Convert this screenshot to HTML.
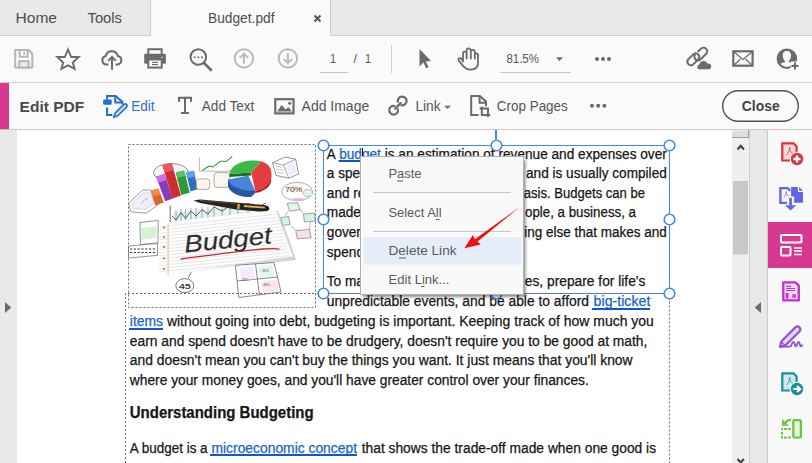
<!DOCTYPE html>
<html>
<head>
<meta charset="utf-8">
<style>
html,body{margin:0;padding:0;width:812px;height:463px;overflow:hidden;background:#fff;font-family:"Liberation Sans",sans-serif;}
.a{position:absolute;}
svg{position:absolute;left:0;top:0;overflow:visible;}
svg text{font-family:"Liberation Sans",sans-serif;}
</style>
</head>
<body>
<!-- tab bar -->
<div class="a" style="left:0;top:0;width:812px;height:35px;background:#e9e9e9;border-bottom:1px solid #cdcdcd;"></div>
<div class="a" style="left:150px;top:0;width:179px;height:36px;background:#fafafa;border-left:1px solid #cdcdcd;border-right:1px solid #cdcdcd;"></div>
<!-- toolbar -->
<div class="a" style="left:0;top:36px;width:812px;height:46px;background:#fafafa;border-bottom:1px solid #d2d2d2;"></div>
<!-- edit bar -->
<div class="a" style="left:0;top:83px;width:812px;height:46px;background:#fafafa;border-bottom:1px solid #c9c9c9;"></div>
<div class="a" style="left:0;top:83px;width:9px;height:46px;background:#d6398f;"></div>
<!-- main -->
<div class="a" style="left:0;top:130px;width:17px;height:333px;background:#e9e9e9;"></div>
<div class="a" style="left:17px;top:130px;width:715px;height:333px;background:#ffffff;"></div>
<div class="a" style="left:732px;top:130px;width:17px;height:333px;background:#efefef;border-right:1px solid #cfcfcf;"></div>
<div class="a" style="left:750px;top:130px;width:17px;height:333px;background:#e8e8e8;border-right:1px solid #c8c8c8;"></div>
<div class="a" style="left:768px;top:130px;width:44px;height:333px;background:#f9f9f9;"></div>

<svg width="812" height="463" viewBox="0 0 812 463">
  <!-- tab texts -->
  <text x="15.5" y="22.5" font-size="15" fill="#4e4e4e" textLength="41.5" lengthAdjust="spacingAndGlyphs">Home</text>
  <text x="87.5" y="22.5" font-size="15" fill="#4e4e4e" textLength="34.5" lengthAdjust="spacingAndGlyphs">Tools</text>
  <text x="208" y="23" font-size="14" fill="#4e4e4e" textLength="66.5" lengthAdjust="spacingAndGlyphs">Budget.pdf</text>
  <path d="M314.5 15.5 L320.5 21.5 M320.5 15.5 L314.5 21.5" stroke="#555" stroke-width="2" fill="none"/>

  <!-- toolbar icons -->
  <g fill="none" stroke="#b5b5b5" stroke-width="2">
    <path d="M15.2 50 H28.8 L32.3 53.8 V67.6 H15.2 Z" stroke-linejoin="round"/>
    <rect x="19.6" y="50" width="8" height="6.8"/>
    <rect x="19.2" y="61.2" width="9.4" height="6.4" fill="#ececec"/>
  </g>
  <rect x="23.3" y="52" width="1.8" height="2.8" fill="#b5b5b5"/>
  <path d="M68 49.5 L71.2 57 L78.7 57 L72.8 62.5 L74.6 68.8 L68 65.3 L61.4 68.8 L63.2 62.5 L57.3 57 L64.8 57 Z" fill="none" stroke="#6b6b6b" stroke-width="1.9" stroke-linejoin="miter"/>
  <g fill="none" stroke="#6b6b6b" stroke-width="2">
    <path d="M108.5 64.5 H106.5 A4.3 4.3 0 0 1 105.8 56 A6.2 6.2 0 0 1 117.8 56 A4.3 4.3 0 0 1 117.6 64.5 H115.5"/>
    <path d="M112 69.8 V56.8 M108.3 60.8 L112 57 L115.7 60.8"/>
  </g>
  <g fill="#6b6b6b">
    <path d="M148.3 54 V49.2 H161.7 V54" fill="none" stroke="#6b6b6b" stroke-width="2"/>
    <rect x="144.2" y="53.8" width="21.7" height="10" rx="1.3"/>
    <rect x="148.3" y="59.5" width="13.4" height="8.1" fill="#fff" stroke="#6b6b6b" stroke-width="2"/>
    <rect x="152" y="61.8" width="6" height="1.2"/>
    <rect x="152" y="64" width="6" height="1.2"/>
    <rect x="161.3" y="57" width="1.6" height="1" fill="#ddd"/>
  </g>
  <g fill="none" stroke="#6b6b6b">
    <circle cx="198.3" cy="57" r="7.8" stroke-width="2"/>
    <path d="M204 63 L211 70" stroke-width="2.6" stroke-linecap="round"/>
  </g>
  <g fill="#6b6b6b"><circle cx="194.6" cy="57.2" r="1"/><circle cx="198.3" cy="57.2" r="1"/><circle cx="202" cy="57.2" r="1"/></g>
  <g fill="none" stroke="#b9b9b9" stroke-width="2">
    <circle cx="243.9" cy="58.4" r="9.2"/>
    <path d="M243.9 63.8 V53.6 M239.6 57.9 L243.9 53.6 L248.2 57.9"/>
    <circle cx="287.9" cy="58.4" r="9.2"/>
    <path d="M287.9 53 V63.2 M283.6 58.9 L287.9 63.2 L292.2 58.9"/>
  </g>
  <text x="330" y="63.2" font-size="12.5" fill="#555" textLength="6" lengthAdjust="spacingAndGlyphs">1</text>
  <rect x="320" y="72" width="28" height="1" fill="#c4c4c4"/>
  <text x="353.5" y="63.2" font-size="12.5" fill="#555">/</text>
  <text x="365" y="63.2" font-size="12.5" fill="#555" textLength="6" lengthAdjust="spacingAndGlyphs">1</text>
  <rect x="391" y="45" width="1" height="28" fill="#cfcfcf"/>
  <path d="M419.5 49 L431 61 L425.8 61.5 L428.6 67.2 L426.2 68.3 L423.4 62.6 L419.5 66.5 Z" fill="#6b6b6b"/>
  <path d="M463 61.5 V53.5 A1.8 1.8 0 0 1 466.6 53.5 V50.5 A2.1 2.1 0 0 1 470.8 50.5 V51.8 A2 2 0 0 1 474.8 51.8 V55 A1.6 1.6 0 0 1 478 55 V63 C478 67 475.5 69.6 470.5 69.6 C467 69.6 465 68.3 462.6 65.4 L458.8 60.6 C457.9 59.4 458.6 57.6 460.3 58.2 C461.3 58.6 462.2 59.6 463 61.5 Z M466.6 53.5 V59.3 M470.8 51.8 V59.3 M474.8 55 V59.3" fill="none" stroke="#6b6b6b" stroke-width="1.8" stroke-linejoin="round"/>
  <text x="506.4" y="63.2" font-size="12.5" fill="#555" textLength="32.6" lengthAdjust="spacingAndGlyphs">81.5%</text>
  <path d="M556 57.3 H563 L559.5 61 Z" fill="#6b6b6b"/>
  <rect x="500" y="72" width="71" height="1" fill="#c8c8c8"/>
  <g fill="#6b6b6b"><circle cx="597" cy="59" r="2"/><circle cx="603" cy="59" r="2"/><circle cx="609" cy="59" r="2"/></g>
  <g fill="none" stroke="#6b6b6b" stroke-width="2">
    <path d="M697.6 52 L701 48.8 A3.6 3.6 0 0 1 706.2 53.8 L700.6 59.4 A3.6 3.6 0 0 1 695.4 54.4"/>
    <path d="M699.6 58 L693 64.6 A3.6 3.6 0 0 1 688 59.6 L693.6 54 A3.6 3.6 0 0 1 698.6 59" />
  </g>
  <path d="M699 69.2 C696.8 69.2 696.6 65 699.6 64.2 C700.2 60.6 705.6 59.8 707.4 63.6 C709.6 63.4 711.6 64.6 711.2 66.8 C711 68.4 710 69.2 709 69.2 Z" fill="#6b6b6b"/>
  <g fill="none" stroke="#6b6b6b">
    <rect x="733.3" y="51.3" width="19.3" height="14.4" stroke-width="2.2"/>
    <path d="M733.5 51.5 L743 59.5 L752.5 51.5 M733.5 65.5 L740.5 59 M752.5 65.5 L745.5 59" stroke-width="1.2"/>
  </g>
  <clipPath id="pc"><circle cx="786.9" cy="58.7" r="8.2"/></clipPath>
  <circle cx="786.9" cy="58.7" r="10.3" fill="#6b6b6b"/>
  <path clip-path="url(#pc)" d="M786.9 50.8 C784 50.8 782.6 53.2 782.8 56 C783 58.6 784 60.2 784.9 61 V62.3 C781.5 63 778 64.5 777 67.5 V72 H797 V67.5 C796 64.5 792.3 63 788.9 62.3 V61 C789.8 60.2 790.8 58.6 791 56 C791.2 53.2 789.8 50.8 786.9 50.8 Z" fill="#fafafa"/>
  <rect x="790.7" y="61.5" width="9.5" height="9.5" fill="#fafafa"/>
  <path d="M795 62.4 V69.6 M791.4 66 H798.6" stroke="#6b6b6b" stroke-width="2"/>

  <!-- edit bar -->
  <text x="19.6" y="111.5" font-size="15.3" font-weight="bold" fill="#4a4a4a" textLength="64.6" lengthAdjust="spacingAndGlyphs">Edit PDF</text>
  <g fill="none" stroke="#1f6fd0" stroke-width="2">
    <path d="M107.1 99.5 V96 H115.6 L122.3 101.8 V104.5"/>
    <path d="M115.3 96 V102.4 H122.3"/>
    <path d="M107.1 107.5 V115 H112.3"/>
  </g>
  <rect x="103.2" y="99.5" width="8.5" height="5.2" rx="1" fill="#1f6fd0"/>
  <path d="M124 104.3 C124.7 103.6 125.6 103.6 126.3 104.3 L126.6 104.6 C127.3 105.3 127.3 106.2 126.6 106.9 L118 115.5 L113.6 117.3 L115.4 112.9 Z" fill="#fafafa" stroke="#1f6fd0" stroke-width="1.7" stroke-linejoin="round"/>
  <path d="M124.9 105.9 L116.6 114.2" stroke="#a8c8ee" stroke-width="0.9"/>
  <text x="131.2" y="111" font-size="14" fill="#2b72c7" textLength="23.2" lengthAdjust="spacingAndGlyphs">Edit</text>
  <g fill="none" stroke="#6b6b6b" stroke-width="2">
    <path d="M179 101.8 V97.8 H191 V101.8 M185 97.8 V113 M181 113 H189"/>
  </g>
  <text x="201.8" y="111.3" font-size="14" fill="#555" textLength="52.6" lengthAdjust="spacingAndGlyphs">Add Text</text>
  <rect x="275.3" y="99.2" width="18.2" height="14.2" fill="none" stroke="#6b6b6b" stroke-width="2.2"/>
  <path d="M277.2 111.5 L281.6 105 L285.6 109.4 L288.4 107 L292 111.5 Z" fill="#6b6b6b"/>
  <circle cx="289.6" cy="103.3" r="1.5" fill="#6b6b6b"/>
  <text x="301.6" y="111.3" font-size="14" fill="#555" textLength="67.6" lengthAdjust="spacingAndGlyphs">Add Image</text>
  <g fill="none" stroke="#6b6b6b" stroke-width="2.2" stroke-linecap="round">
    <path d="M397.87 101.76 A4.4 4.4 0 1 1 401.44 105.33"/>
    <path d="M397.93 109.44 A4.4 4.4 0 1 1 394.36 105.87"/>
    <path d="M400.6 103.2 L395.2 108.6" stroke-width="2.4"/>
  </g>
  <text x="415.4" y="111" font-size="14" fill="#555" textLength="25.2" lengthAdjust="spacingAndGlyphs">Link</text>
  <path d="M444 105.8 H451 L447.5 109 Z" fill="#6b6b6b"/>
  <g fill="none" stroke="#6b6b6b" stroke-width="2">
    <path d="M478.6 115 H471.2 V96 H479.9 L486 101.4 V106.2"/>
    <path d="M479.6 96 V102.7 H486"/>
    <path d="M481.8 106.6 V115 H490.3 M479.6 108.5 H488 V117"/>
  </g>
  <text x="496.8" y="111" font-size="14" fill="#555" textLength="71" lengthAdjust="spacingAndGlyphs">Crop Pages</text>
  <g fill="#6b6b6b"><circle cx="592" cy="105.8" r="2"/><circle cx="598.2" cy="105.8" r="2"/><circle cx="604.4" cy="105.8" r="2"/></g>
  <rect x="722.7" y="90.7" width="75.6" height="30.6" rx="15.3" fill="#fafafa" stroke="#505050" stroke-width="1.4"/>
  <text x="741.8" y="110.7" font-size="15" font-weight="bold" fill="#444" textLength="38" lengthAdjust="spacingAndGlyphs">Close</text>

  <!-- document image -->
  <g id="img">
    <defs>
      <linearGradient id="shad" x1="0" y1="0" x2="1" y2="0"><stop offset="0" stop-color="#ddd" stop-opacity="0"/><stop offset="1" stop-color="#bbb" stop-opacity="0.7"/></linearGradient>
    </defs>
    <!-- tablet sketch left -->
    <path d="M128.5 203.3 L142.7 190 L151.2 190 L158.2 204.7 L146.2 213.2 L130.8 211.8 Z" fill="#fdfdff" stroke="#777" stroke-width="0.7"/>
    <path d="M132 203 L143.5 193 L150 193 L154.5 203 L145.5 209.5 L133.5 208.5 Z" fill="#efeefb" stroke="#aaa" stroke-width="0.4"/>
    <path d="M141 204 L146 198 L148 200" fill="none" stroke="#888" stroke-width="0.5"/>
    <!-- sketch ellipse behind bars -->
    <ellipse cx="171" cy="172.5" rx="17.5" ry="9" fill="#f7f2fb" stroke="#666" stroke-width="0.7"/>
    <!-- bars 3D -->
    <path d="M150.5 190.7 L158.2 188.6 L163.8 202.6 L155.4 205.4 Z" fill="#d8692a"/>
    <path d="M150.5 190.7 L158.2 188.6 L161 194.2 L153.3 196.3 Z" fill="#f08c45"/>
    <path d="M156.1 176.7 L164.5 173.9 L172.9 198.4 L165.2 201.2 Z" fill="#8a3cb5"/>
    <path d="M156.1 176.7 L164.5 173.9 L167 180 L158.6 182.8 Z" fill="#c373e6"/>
    <path d="M162.4 165.4 L171.5 162.9 L181 195.6 L172.6 198.4 Z" fill="#cf2d33"/>
    <path d="M162.4 165.4 L171.5 162.9 L174 170 L165 172.5 Z" fill="#f0555a"/>
    <path d="M175.7 172.2 L184.1 170.4 L189.8 192.8 L181.3 194.9 Z" fill="#2f9a38"/>
    <path d="M175.7 172.2 L184.1 170.4 L185.8 176 L177.4 177.8 Z" fill="#58c85e"/>
    <path d="M186.2 172.5 L194 170.8 L197.5 189.3 L190.5 191.4 Z" fill="#2f6fc0"/>
    <path d="M186.2 172.5 L194 170.8 L195.3 176.5 L187.5 178.2 Z" fill="#62a0ea"/>
    <!-- line chart top -->
    <path d="M199.4 157.8 V171.2 H236" fill="none" stroke="#888" stroke-width="0.6"/>
    <path d="M202 170.5 L209 166.2 L213.2 167 L220.3 161.3 L226.6 161.3 L232.2 156.4" fill="none" stroke="#3a9a3a" stroke-width="1.1"/>
    <rect x="214" y="172.6" width="16" height="14.7" rx="3" fill="#fdf6ef" stroke="#777" stroke-width="0.6"/>
    <rect x="196.4" y="178.9" width="13.3" height="10.5" rx="2.5" fill="#fdf5ea" stroke="#777" stroke-width="0.6"/>
    <!-- pie chart -->
    <path d="M228 179.6 V185.9 A23 12 0 0 0 251.1 197.1 L255.4 193 V190.8 Z" fill="#2a56a6"/>
    <path d="M228 179.6 L248.3 175.4 L255.4 190.8 A25 13 0 0 1 228 179.6 Z" fill="#4586dc"/>
    <path d="M255.4 190.8 V193 A20 14 0 0 0 271 181.7 V174 A20 16 0 0 1 255.4 190.8 Z" fill="#a81f25"/>
    <path d="M251.1 172.6 L261.7 161.3 A20 14 0 0 1 271.5 174 A20 16 0 0 1 255.4 190.8 Z" fill="#e63c40"/>
    <path d="M229.4 174 V177 L251.1 175.5 V172.6 Z" fill="#1d6a23"/>
    <path d="M229.4 174 A24 14 0 0 1 261.7 161.3 L251.1 172.6 Z" fill="#3db848"/>
    <!-- cube sketch -->
    <path d="M272.5 162.7 L285.2 157.1 L295.7 159.2 L298.5 174 L288.7 178.2 L276 175.4 Z" fill="#fff" stroke="#666" stroke-width="0.7"/>
    <path d="M272.5 162.7 L283.5 165 L288.7 178.2 M283.5 165 L295.7 159.2" fill="none" stroke="#666" stroke-width="0.6"/>
    <path d="M285.5 165.5 L294 161.5 L296.5 172.5 L289.5 176 Z" fill="#eeeefc"/>
    <path d="M275 166 L282 167.5 M276 169 L283 170.5 M277 172 L284 173.5" stroke="#888" stroke-width="0.5"/>
    <!-- 70% bubble -->
    <ellipse cx="297.1" cy="191.5" rx="15.4" ry="9.1" fill="#fff" stroke="#777" stroke-width="0.6"/>
    <ellipse cx="293" cy="189" rx="8" ry="4" fill="#fdf0e2"/>
    <text x="285.2" y="191.5" font-size="6.8" fill="#4a3c30" textLength="17" lengthAdjust="spacingAndGlyphs">70%</text>
    <ellipse cx="307.6" cy="193" rx="5" ry="3.6" fill="#dcf1f3" stroke="#888" stroke-width="0.5"/>
    <rect x="292.9" y="198.3" width="11.2" height="2.4" rx="1.2" fill="#ecaef0"/>
    <!-- flowchart right -->
    <path d="M287.3 203.4 L297.8 202.7 L299.9 209.7 L289.4 211.1 Z" fill="#e4f6e8" stroke="#666" stroke-width="0.6"/>
    <path d="M281 217.5 L288.6 216.5 L290.1 224.5 L282.5 225.5 Z" fill="#d6eff3" stroke="#666" stroke-width="0.6"/>
    <path d="M303.4 214 L314.5 213 L315.5 221 L304.5 222 Z" fill="#d6eff3" stroke="#666" stroke-width="0.6"/>
    <path d="M295.7 230.5 L309.5 229.5 L311.1 237.8 L297.3 238.8 Z" fill="#fbdde2" stroke="#666" stroke-width="0.6"/>
    <path d="M285 215.5 L288 211.5 M303 213 L300 210 M291 226 L295.5 229.5 M309.5 229 L310.5 222.5" fill="none" stroke="#666" stroke-width="0.5"/>
    <!-- chart under pen -->
    <path d="M172 212 L268 206 L272 222 L174 226 Z" fill="#e2f3f4"/>
    <path d="M170.2 205.5 V223.5" stroke="#444" stroke-width="0.8"/>
    <path d="M172 216 L176 220 L181 212.5 L185.5 218.5 L191 211 L196 216 L202 209.5 L208 214 L214 207 L222 211 L230 205.5 L238 209 L248 203.5 L258 207 L266 203" fill="none" stroke="#333" stroke-width="0.8"/>
    <path d="M176 210 V224 M181 209 V223.5 M185.5 209 V223 M191 208 V223 M196 208 V222.5 M202 207 V222 M208 207 V222 M214 206 V221.5 M222 206 V221 M230 205 V220.5 M238 205 V220 M248 204 V219.5 M258 204 V219" stroke="#555" stroke-width="0.5"/>
    <!-- pen -->
    <path d="M193.5 200.5 L200 199.6 L264 205 C268.5 205.5 270 207.5 269 209.5 C268 211.5 265 212 262 211.8 L236 209.5 L200 203 Z" fill="#2b211d"/>
    <path d="M200 200.5 L236 203.5" stroke="#6a5a50" stroke-width="0.7"/>
    <path d="M237.5 203.8 L240 204 L239.5 209.3 L237 209.1 Z" fill="#c9a447"/>
    <path d="M244 205 L265 206.8 L264.5 208.6 L244 207 Z" fill="#d4b24e"/>
    <!-- laptop sketch left lower -->
    <path d="M140 222.5 L158.2 220.5 L158 242.9 L140.5 244.5 Z" fill="#fff" stroke="#666" stroke-width="0.7"/>
    <path d="M141.5 228 L156.5 226.5 L156.5 238 L141.5 239.5 Z" fill="#d4f3d4"/>
    <path d="M128.5 246 L157.5 243.5 L157.5 255.4 L128.5 258 Z" fill="#fff" stroke="#666" stroke-width="0.7"/>
    <path d="M130 249 H156 M130 252.5 H156" stroke="#333" stroke-width="1.1" stroke-dasharray="2.2 1.6"/>
    <!-- notepad -->
    <path d="M158 224.5 C200 219 250 213 278 210.5 C284 225 290 240 296 260 C250 265 200 270 158 278 Z" fill="url(#shad)"/>
    <path d="M159.6 223.5 C200 218 248 212.5 276 210.5 C281 225 287 240 292.9 256.5 C250 262 200 268 157.5 275 Z" fill="#fdfdfd"/>
    <g stroke="#d0d0d0" stroke-width="0.5" fill="none">
      <path d="M160 227 L277.5 214 M160 230.2 L278.5 217.2 M160 233.4 L279.5 220.4 M160 236.6 L280.5 223.6 M160 239.8 L281.5 226.8 M160 243 L282.5 230 M160 246.2 L283.5 233.2 M160 249.4 L284.5 236.4 M159.5 252.6 L285.5 239.6 M159.5 255.8 L286.5 242.8 M159.5 259 L287.5 246 M159.5 262.2 L288.5 249.2 M159 265.4 L289.5 252.4 M159 268.6 L290.5 255.6 M158.5 271.8 L291 258.8"/>
    </g>
    <path d="M168.1 224 V275" stroke="#eab89a" stroke-width="0.9"/>
    <g fill="#888"><ellipse cx="163.9" cy="227.5" rx="1.3" ry="1"/><ellipse cx="163.9" cy="237.3" rx="1.3" ry="1"/><ellipse cx="163.9" cy="247.1" rx="1.3" ry="1"/><ellipse cx="163.9" cy="258.3" rx="1.3" ry="1"/><ellipse cx="163.9" cy="268.9" rx="1.3" ry="1"/></g>
    <text x="185" y="252.5" font-size="24" font-style="italic" fill="#2e2e2e" stroke="#2e2e2e" stroke-width="0.15" transform="rotate(-6 185 252.5)" textLength="88" lengthAdjust="spacingAndGlyphs">Budget</text>
    <path d="M180.7 259 C205 256 240 251 263 249 C272 248.3 277 248.5 279.6 249.1" fill="none" stroke="#c42a2e" stroke-width="1.3"/>
    <!-- 45 -->
    <path d="M188.4 277.9 L191.2 272.3" stroke="#444" stroke-width="0.8"/>
    <ellipse cx="184.8" cy="285.6" rx="9" ry="7" fill="#fff" stroke="#555" stroke-width="0.8"/>
    <text x="178.8" y="288.6" font-size="8" font-weight="bold" fill="#4a3a4a" textLength="12" lengthAdjust="spacingAndGlyphs">45</text>
    <!-- bottom grid sketch -->
    <path d="M235.4 265.3 L274 262.5 L281 292 L238.9 297.5 Z" fill="#fff" stroke="#555" stroke-width="0.7" stroke-linejoin="round"/>
    <path d="M255.5 264 L259.5 295 M237 281 L278 277" stroke="#555" stroke-width="0.7" fill="none"/>
    <path d="M240 268 L253 267 L255 279 L241 280 Z" fill="#f5eafa"/>
    <path d="M258.5 266 L272 265 L275 276 L260 277.5 Z" fill="#e4f5f6"/>
    <path d="M261 281 L277 279.5 L279 291 L263 293 Z" fill="#fbe6ea"/>
    <text x="241.5" y="281" font-size="3.6" fill="#555">28%</text>
    <text x="262" y="272" font-size="3.6" fill="#555">36%</text>
    <text x="263" y="286" font-size="3.6" fill="#555">48%</text>
  </g>

  <!-- dashed boxes -->
  <rect x="128.5" y="144.5" width="187" height="163" fill="none" stroke="#6a6a6a" stroke-width="1" stroke-dasharray="2 2"/>

  <!-- doc text -->
  <g stroke-width="0.25">
<text x="326.8" y="158.6" font-size="14" fill="#161616" stroke="#161616" textLength="9.0" lengthAdjust="spacingAndGlyphs" xml:space="preserve">A</text>
<text x="339.2" y="158.6" font-size="14" fill="#161616" stroke="#161616" textLength="327.6" lengthAdjust="spacingAndGlyphs" xml:space="preserve"><tspan fill="#1a62c8" stroke="#1a62c8">budget</tspan> is an estimation of revenue and expenses over</text>
<text x="326.8" y="178.2" font-size="14" fill="#161616" stroke="#161616" textLength="65.2" lengthAdjust="spacingAndGlyphs" xml:space="preserve">a specified</text>
<text x="526.0" y="178.2" font-size="14" fill="#161616" stroke="#161616" textLength="140.8" lengthAdjust="spacingAndGlyphs" xml:space="preserve">and is usually compiled</text>
<text x="326.8" y="197.7" font-size="14" fill="#161616" stroke="#161616" textLength="102.3" lengthAdjust="spacingAndGlyphs" xml:space="preserve">and re-evaluated</text>
<text x="523.8" y="197.7" font-size="14" fill="#161616" stroke="#161616" textLength="121.2" lengthAdjust="spacingAndGlyphs" xml:space="preserve">asis. Budgets can be</text>
<text x="326.8" y="217.3" font-size="14" fill="#161616" stroke="#161616" textLength="65.2" lengthAdjust="spacingAndGlyphs" xml:space="preserve">made for a</text>
<text x="525.0" y="217.3" font-size="14" fill="#161616" stroke="#161616" textLength="111.0" lengthAdjust="spacingAndGlyphs" xml:space="preserve">ople, a business, a</text>
<text x="326.8" y="236.9" font-size="14" fill="#161616" stroke="#161616" textLength="75.8" lengthAdjust="spacingAndGlyphs" xml:space="preserve">government,</text>
<text x="524.3" y="236.9" font-size="14" fill="#161616" stroke="#161616" textLength="142.5" lengthAdjust="spacingAndGlyphs" xml:space="preserve">ing else that makes and</text>
<text x="326.8" y="256.5" font-size="14" fill="#161616" stroke="#161616" textLength="91.5" lengthAdjust="spacingAndGlyphs" xml:space="preserve">spends money.</text>
<text x="326.8" y="286.0" font-size="14" fill="#161616" stroke="#161616" textLength="67.5" lengthAdjust="spacingAndGlyphs" xml:space="preserve">To manage</text>
<text x="524.8" y="286.0" font-size="14" fill="#161616" stroke="#161616" textLength="120.6" lengthAdjust="spacingAndGlyphs" xml:space="preserve">es, prepare for life's</text>
<text x="326.8" y="305.6" font-size="14" fill="#161616" stroke="#161616" textLength="262.2" lengthAdjust="spacingAndGlyphs" xml:space="preserve">unpredictable events, and be able to afford</text>
<text x="593.6" y="305.6" font-size="14" fill="#161616" stroke="#161616" textLength="56.8" lengthAdjust="spacingAndGlyphs" xml:space="preserve"><tspan fill="#1a62c8" stroke="#1a62c8">big-ticket</tspan></text>
<text x="129.8" y="325.9" font-size="14" fill="#161616" stroke="#161616" textLength="33.2" lengthAdjust="spacingAndGlyphs" xml:space="preserve"><tspan fill="#1a62c8" stroke="#1a62c8">items</tspan></text>
<text x="166.9" y="325.9" font-size="14" fill="#161616" stroke="#161616" textLength="486.9" lengthAdjust="spacingAndGlyphs" xml:space="preserve">without going into debt, budgeting is important. Keeping track of how much you</text>
<text x="129.8" y="345.5" font-size="14" fill="#161616" stroke="#161616" textLength="517.6" lengthAdjust="spacingAndGlyphs" xml:space="preserve">earn and spend doesn't have to be drudgery, doesn't require you to be good at math,</text>
<text x="129.8" y="365.1" font-size="14" fill="#161616" stroke="#161616" textLength="502.8" lengthAdjust="spacingAndGlyphs" xml:space="preserve">and doesn't mean you can't buy the things you want. It just means that you'll know</text>
<text x="129.8" y="384.7" font-size="14" fill="#161616" stroke="#161616" textLength="459.0" lengthAdjust="spacingAndGlyphs" xml:space="preserve">where your money goes, and you'll have greater control over your finances.</text>
<text x="129.8" y="418.2" font-size="16" font-weight="bold" fill="#161616" stroke="#161616" textLength="183.8" lengthAdjust="spacingAndGlyphs" xml:space="preserve">Understanding Budgeting</text>
<text x="129.8" y="453.0" font-size="14" fill="#161616" stroke="#161616" textLength="77.8" lengthAdjust="spacingAndGlyphs" xml:space="preserve">A budget is a</text>
<text x="211.5" y="453.0" font-size="14" fill="#161616" stroke="#161616" textLength="145.5" lengthAdjust="spacingAndGlyphs" xml:space="preserve"><tspan fill="#1a62c8" stroke="#1a62c8">microeconomic concept</tspan></text>
<text x="361.7" y="453.0" font-size="14" fill="#161616" stroke="#161616" textLength="294.4" lengthAdjust="spacingAndGlyphs" xml:space="preserve">that shows the trade-off made when one good is</text>
  </g>
  <g fill="#1259c6">
    <rect x="338.5" y="160" width="38" height="2"/>
    <rect x="592" y="308" width="58" height="2"/>
    <rect x="129" y="328" width="34" height="2"/>
    <rect x="210" y="454" width="147" height="2"/>
  </g>
  <!-- lower text box dashed -->
  <path d="M125.5 463 V293.5 H316 M669.5 293.5 V463" fill="none" stroke="#6a6a6a" stroke-width="1" stroke-dasharray="2 2"/>

  <!-- selection -->
  <g fill="none" stroke="#3d8bf2">
    <rect x="323.5" y="145.5" width="346" height="148" stroke-width="1"/>
    <path d="M496 130 V139.5" stroke-width="2"/>
  </g>
  <path d="M316 293.5 H669.5" fill="none" stroke="#6a6a6a" stroke-width="1" stroke-dasharray="2 2" opacity="0.6"/>
  <g fill="#fff" stroke="#3d8bf2" stroke-width="1.6">
    <circle cx="323.5" cy="145.5" r="5.3"/>
    <circle cx="496.5" cy="145.5" r="5.3"/>
    <circle cx="669.5" cy="145.5" r="5.3"/>
    <circle cx="323.5" cy="219.5" r="5.3"/>
    <circle cx="669.5" cy="219.5" r="5.3"/>
    <circle cx="323.5" cy="293.5" r="5.3"/>
    <circle cx="496.5" cy="293.5" r="5.3"/>
    <circle cx="669.5" cy="293.5" r="5.3"/>
  </g>
  <rect x="362" y="148" width="1" height="8" fill="#111"/>

  <!-- context menu -->
  <filter id="msh" x="-20%" y="-20%" width="140%" height="140%"><feGaussianBlur stdDeviation="1.6"/></filter>
  <rect x="362.5" y="160" width="163" height="137" fill="#000" opacity="0.45" filter="url(#msh)"/>
  <rect x="360.5" y="156.5" width="163" height="138" fill="#f9f9f9" stroke="#b0b0b0" stroke-width="1"/>
  <rect x="373" y="192" width="138" height="1" fill="#c6c6c6"/>
  <rect x="373" y="231" width="138" height="1" fill="#c6c6c6"/>
  <rect x="363.5" y="237" width="158" height="27.5" fill="#e5eef8"/>
  <g font-size="13.5" fill="#5a5a5a">
    <text x="388.5" y="178.2" textLength="33" lengthAdjust="spacingAndGlyphs">Paste</text>
    <text x="388.5" y="216.9" textLength="53" lengthAdjust="spacingAndGlyphs">Select All</text>
    <text x="388.5" y="255.4" textLength="68" lengthAdjust="spacingAndGlyphs">Delete Link</text>
    <text x="388.5" y="283.8" textLength="61" lengthAdjust="spacingAndGlyphs">Edit Link...</text>
  </g>
  <g fill="#5a5a5a">
    <rect x="397" y="180.5" width="6" height="1"/>
    <rect x="436" y="219" width="3.5" height="1"/>
    <rect x="399" y="257.5" width="7" height="1"/>
    <rect x="421" y="286" width="3.5" height="1"/>
  </g>
  <!-- red arrow -->
  <path d="M464.4 248.3 L472.9 235 L474.8 239.2 L519.7 207.1 L477.6 241.5 L480.7 244.6 Z" fill="#f01010"/>

  <!-- scrollbar & panels -->
  <rect x="732" y="131" width="16.5" height="6.5" fill="#dedede"/>
  <rect x="732" y="137" width="17" height="1" fill="#9d9d9d"/>
  <rect x="748" y="130" width="1" height="8" fill="#9d9d9d"/>
  <path d="M737.5 149.5 L740.7 145.8 L744 149.5" fill="none" stroke="#404040" stroke-width="2"/>
  <rect x="733" y="181" width="15" height="73.5" fill="#c8c8c8"/>
  <path d="M737.5 459 L740.7 462.5 L744 459" fill="none" stroke="#404040" stroke-width="2"/>
  <path d="M5 302 L11.2 307.5 L5 313 Z" fill="#6a6a6a"/>
  <path d="M754.8 307.5 L761 302 L761 313 Z" fill="#6a6a6a"/>

  <!-- right tool panel -->
  <rect x="768" y="222" width="44" height="46" fill="#d6398f"/>
  <g fill="none" stroke="#fff" stroke-width="2">
    <rect x="781" y="235" width="20.5" height="7.5" rx="1"/>
    <rect x="781" y="247" width="9.5" height="8.5" rx="1"/>
    <path d="M794 248 H802 M794 251 H802 M794 254.5 H802" stroke-width="1.5"/>
  </g>
  <!-- create pdf -->
  <path d="M782.3 143.3 H793.6 L796.6 146.4 V152 M789.9 160.5 H782.3 Z" fill="#f8d7da"/>
  <path d="M789.9 160.5 H782.3 V143.3 H793.6 L796.6 146.4 V152" fill="#f8d7da" stroke="#d9333f" stroke-width="2.2"/>
  <path d="M786.5 155 C788 153.5 789.6 151 790 148 C790.3 146.5 789.5 147.5 789.5 149 C789.8 151 791.5 153 793.5 153.5" fill="none" stroke="#d9333f" stroke-width="0.8"/>
  <circle cx="797" cy="159" r="7.2" fill="#f9f9f9"/>
  <circle cx="797" cy="159" r="6.2" fill="#d9333f"/>
  <path d="M797 155.5 V162.5 M793.5 159 H800.5" stroke="#fff" stroke-width="2.4"/>
  <!-- combine -->
  <path d="M787 202.8 H780.4 V188.2 H787.6 L790.2 190.8" fill="none" stroke="#6164e4" stroke-width="2.3"/>
  <path d="M791.1 186.9 H797.9 V192 H803 V202.8 H794.2 V196.5 H791.1 Z" fill="#6164e4"/>
  <path d="M799.1 186.9 L803 190.8 H799.1 Z" fill="#6164e4"/>
  <path d="M783.8 197.5 C785.2 196 786.2 194 786.5 191.8 C786.6 190.8 786 191.2 786 192.3 C786.3 194 787.6 195.6 789 196" fill="none" stroke="#6164e4" stroke-width="0.8"/>
  <rect x="789.2" y="197.8" width="2.7" height="7.8" fill="#6164e4"/>
  <path d="M785 205.3 H796.2 L790.6 210.6 Z" fill="#6164e4"/>
  <!-- form -->
  <path d="M783.3 282.4 H795.4 L798.8 285.6 V300.4 H783.3 Z" fill="#f3dcf5" stroke="#c22fd2" stroke-width="2.3" stroke-linejoin="round"/>
  <path d="M786 286.4 H791 M786 288.5 H795 M786 290.5 H795" stroke="#c22fd2" stroke-width="1.1"/>
  <path d="M785.6 293 H788.5 V297.6 L787.05 299.2 L785.6 297.6 Z" fill="#c22fd2"/>
  <path d="M792.4 294.2 L795.8 297.6 M795.8 294.2 L792.4 297.6" stroke="#c22fd2" stroke-width="1.5"/>
  <!-- sign -->
  <path d="M795.35 327.35 A2.9 2.9 0 0 1 799.45 331.45 L785.35 345.55 L780 347 L781.25 341.45 Z" fill="#e4d8f5" stroke="#9350e0" stroke-width="2.2" stroke-linejoin="round"/>
  <path d="M780.2 346.6 H790.3 C791.4 346.6 791.9 341.9 793.4 341.9 C794.9 341.9 794.5 346.3 795.9 346.3 C797.3 346.3 797.1 341.9 798.5 341.9 C799.9 341.9 799.7 346.3 800.9 346.3 C801.7 346.3 802.3 345.5 802.7 344.7" fill="none" stroke="#9350e0" stroke-width="1.9"/>
  <path d="M781.5 341.8 L785 345.3" stroke="#9350e0" stroke-width="1.2"/>
  <!-- export -->
  <path d="M789.9 390.5 H782.3 V373.3 H793.6 L796.6 376.4 V382" fill="#d1e8ea" stroke="#1b8c98" stroke-width="2.2"/>
  <path d="M786.5 385 C788 383.5 789.6 381 790 378 C790.3 376.5 789.5 377.5 789.5 379 C789.8 381 791.5 383 793.5 383.5" fill="none" stroke="#1b8c98" stroke-width="0.8"/>
  <circle cx="797" cy="389" r="7.2" fill="#f9f9f9"/>
  <circle cx="797" cy="389" r="6.2" fill="#1b8c98"/>
  <path d="M793.3 389 H798.5 M797 386 L800.3 389 L797 392" fill="none" stroke="#fff" stroke-width="2"/>
  <!-- organize -->
  <rect x="793.3" y="420.2" width="7.6" height="17.3" rx="1.2" fill="#e3f4d8" stroke="#6cc53e" stroke-width="2.2"/>
  <g fill="#6cc53e">
    <rect x="781.1" y="428" width="1.9" height="2"/><rect x="784" y="428" width="2.8" height="2"/><rect x="787.9" y="428" width="2.9" height="2"/>
    <rect x="781.1" y="431.8" width="1.9" height="2.9"/><rect x="781.1" y="435.9" width="1.9" height="2.7"/>
    <rect x="784" y="436.6" width="2.8" height="2"/><rect x="787.9" y="436.6" width="2.9" height="2"/>
    <path d="M782.1 419.1 V425.7 H788.9 Z"/>
  </g>
  <path d="M785 423 C786.8 420.8 788.8 419.9 791 419.7" fill="none" stroke="#6cc53e" stroke-width="2.3"/>
  </svg>
</body>
</html>
